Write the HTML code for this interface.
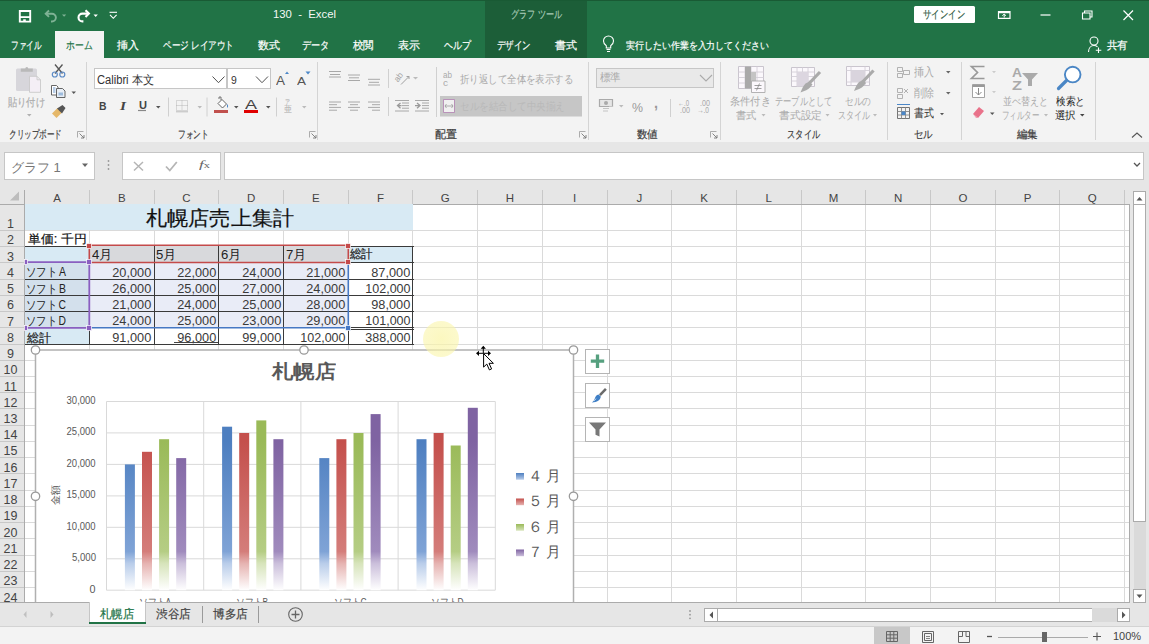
<!DOCTYPE html><html><head><meta charset="utf-8"><style>
*{box-sizing:border-box;margin:0;padding:0}
html,body{width:1149px;height:644px;overflow:hidden;background:#fff;font-family:"Liberation Sans",sans-serif;}
.ab{position:absolute}
.t{position:absolute;white-space:nowrap;line-height:1}
.t span{display:inline-block}
.b{-webkit-text-stroke:0.2px currentColor}
svg{position:absolute;overflow:visible}
</style></head><body>

<div class="ab" style="left:0px;top:0px;width:1149px;height:58px;background:#217346;"></div>
<div class="ab" style="left:485px;top:1px;width:102px;height:57px;background:#1c5e38;"></div>
<div class="ab" style="left:0px;top:0px;width:1149px;height:1px;background:#195a34;"></div>
<svg style="left:0;top:0" width="130" height="31">
<path d="M19.8 11h10.4v10.6h-10.4z" fill="none" stroke="#fff" stroke-width="1.9"/>
<path d="M19.8 16.2h10.4v1.8h-10.4z" fill="#fff"/>
<path d="M23.2 19.3h2.6v2.3h-2.6z" fill="#fff"/>
<g fill="none" stroke="#7fb295" stroke-width="1.9"><path d="M49 10.5l-3.3 3.2l3.3 3.2"/><path d="M46.2 13.7h5.8a3.9 3.9 0 0 1 0 7.8h-1"/></g>
<path d="M62 14.5h4.2l-2.1 2.3z" fill="#7fb295"/>
<g fill="none" stroke="#fff" stroke-width="2.1"><path d="M85.5 10.2l3.4 3.4l-3.4 3.4"/><path d="M88.6 13.6h-6.2a3.9 3.9 0 0 0 0 7.8h1"/></g>
<path d="M93.5 14.5h4.4l-2.2 2.4z" fill="#fff"/>
<path d="M109.5 12.3h7.5" stroke="#fff" stroke-width="1.1"/><path d="M110 14.8l3.3 3.5l3.3-3.5" fill="none" stroke="#fff" stroke-width="1.1"/>
</svg>
<div class="t " id="t1" style="top:9px;font-size:11px;color:#f4f8f5;left:272.5px;transform:scaleX(1.0304);transform-origin:0 0;"><span>130&nbsp; - &nbsp;Excel</span></div>
<div class="t b" id="t2" style="top:9px;font-size:11px;color:#a9cbb7;left:511px;transform:scaleX(0.7385);transform-origin:0 0;"><span>グラフ ツール</span></div>
<div class="ab" style="left:914px;top:6px;width:61px;height:17px;background:#fff;border-radius:1.5px"></div>
<div class="t b" id="t3" style="top:9px;font-size:11px;color:#2f5a43;left:923px;transform:scaleX(0.7636);transform-origin:0 0;"><span>サインイン</span></div>
<svg style="left:0;top:0" width="1149" height="31">
<path d="M998.5 11.5h11.5v6.8h-11.5z" fill="none" stroke="#fff" stroke-width="1.2"/>
<path d="M998.5 12.5h11.5" stroke="#fff" stroke-width="1.5"/>
<path d="M1004.2 14v3.5M1002.4 15.8l1.8-1.8l1.8 1.8" stroke="#fff" stroke-width="1" fill="none"/>
<path d="M1040.5 15h10" stroke="#fff" stroke-width="1.2"/>
<path d="M1082.5 13h7.5v6h-7.5z M1084.5 13v-2h7.5v6h-2" fill="none" stroke="#fff" stroke-width="1.1"/>
<path d="M1123.5 10.5l9.5 9.5M1133 10.5l-9.5 9.5" stroke="#fff" stroke-width="1.2"/>
</svg>
<div class="ab" style="left:55px;top:31px;width:49px;height:27px;background:#f3f3f3;"></div>
<div class="t b" id="t4" style="top:40px;font-size:11px;color:#fff;left:11.2px;transform:scaleX(0.6932);transform-origin:0 0;"><span>ファイル</span></div>
<div class="t b" id="t5" style="top:40px;font-size:11px;color:#217346;left:66.2px;transform:scaleX(0.8030);transform-origin:0 0;"><span>ホーム</span></div>
<div class="t b" id="t6" style="top:40px;font-size:11px;color:#fff;left:116.7px;"><span>挿入</span></div>
<div class="t b" id="t7" style="top:40px;font-size:11px;color:#fff;left:162.7px;transform:scaleX(0.7797);transform-origin:0 0;"><span>ページ レイアウト</span></div>
<div class="t b" id="t8" style="top:40px;font-size:11px;color:#fff;left:257.7px;"><span>数式</span></div>
<div class="t b" id="t9" style="top:40px;font-size:11px;color:#fff;left:302.2px;transform:scaleX(0.8333);transform-origin:0 0;"><span>データ</span></div>
<div class="t b" id="t10" style="top:40px;font-size:11px;color:#fff;left:352.7px;transform:scaleX(0.9545);transform-origin:0 0;"><span>校閲</span></div>
<div class="t b" id="t11" style="top:40px;font-size:11px;color:#fff;left:397.7px;"><span>表示</span></div>
<div class="t b" id="t12" style="top:40px;font-size:11px;color:#fff;left:443.7px;transform:scaleX(0.8182);transform-origin:0 0;"><span>ヘルプ</span></div>
<div class="t b" id="t13" style="top:40px;font-size:11px;color:#fff;left:496.7px;transform:scaleX(0.7727);transform-origin:0 0;"><span>デザイン</span></div>
<div class="t b" id="t14" style="top:40px;font-size:11px;color:#fff;left:554.7px;"><span>書式</span></div>
<div class="t b" id="t15" style="top:40.5px;font-size:10.2px;color:#fff;left:625.7px;transform:scaleX(0.8938);transform-origin:0 0;"><span>実行したい作業を入力してください</span></div>
<div class="t b" id="t16" style="top:40px;font-size:11px;color:#fff;left:1106.7px;transform:scaleX(0.9545);transform-origin:0 0;"><span>共有</span></div>
<svg style="left:0;top:0" width="1149" height="58">
<path d="M606.5 49.5h4M607 51.5h3" stroke="#fff" stroke-width="1"/>
<path d="M606.3 48v-2.3c-1.8-1.2-2.8-2.8-2.8-4.7a5 5 0 0 1 10 0c0 1.9-1 3.5-2.8 4.7v2.3z" fill="none" stroke="#fff" stroke-width="1.1"/>
<circle cx="1094" cy="41" r="4" fill="none" stroke="#fff" stroke-width="1.1"/>
<path d="M1088.5 52c0-4 2.5-6.5 5.5-6.5c1.5 0 2.5 0.5 3.5 1.2" fill="none" stroke="#fff" stroke-width="1.1"/>
<path d="M1098.5 47.5v5.5M1095.8 50.2h5.5" stroke="#fff" stroke-width="1.1"/>
</svg>
<div class="ab" style="left:0px;top:58px;width:1149px;height:84px;background:#f3f3f3;"></div>
<div class="ab" style="left:0px;top:142px;width:1149px;height:1px;background:#d6d6d6;"></div>
<div class="ab" style="left:86px;top:62px;width:1px;height:78px;background:#d4d4d4;"></div>
<div class="ab" style="left:317px;top:62px;width:1px;height:78px;background:#d4d4d4;"></div>
<div class="ab" style="left:588px;top:62px;width:1px;height:78px;background:#d4d4d4;"></div>
<div class="ab" style="left:720px;top:62px;width:1px;height:78px;background:#d4d4d4;"></div>
<div class="ab" style="left:887px;top:62px;width:1px;height:78px;background:#d4d4d4;"></div>
<div class="ab" style="left:961px;top:62px;width:1px;height:78px;background:#d4d4d4;"></div>
<div class="ab" style="left:1095px;top:62px;width:1px;height:78px;background:#d4d4d4;"></div>
<div class="t b" id="t17" style="top:129px;font-size:10.5px;color:#3c3c3c;left:9px;transform:scaleX(0.6883);transform-origin:0 0;"><span>クリップボード</span></div>
<div class="t b" id="t18" style="top:129px;font-size:10.5px;color:#3c3c3c;left:178px;transform:scaleX(0.7045);transform-origin:0 0;"><span>フォント</span></div>
<div class="t b" id="t19" style="top:129px;font-size:10.5px;color:#3c3c3c;left:435px;"><span>配置</span></div>
<div class="t b" id="t20" style="top:129px;font-size:10.5px;color:#3c3c3c;left:637px;transform:scaleX(0.9545);transform-origin:0 0;"><span>数値</span></div>
<div class="t b" id="t21" style="top:129px;font-size:10.5px;color:#3c3c3c;left:787px;transform:scaleX(0.7500);transform-origin:0 0;"><span>スタイル</span></div>
<div class="t b" id="t22" style="top:129px;font-size:10.5px;color:#3c3c3c;left:914px;transform:scaleX(0.8636);transform-origin:0 0;"><span>セル</span></div>
<div class="t b" id="t23" style="top:129px;font-size:10.5px;color:#3c3c3c;left:1017px;transform:scaleX(0.9545);transform-origin:0 0;"><span>編集</span></div>
<svg style="left:77px;top:131px" width="8" height="8"><path d="M0.5 6.5v-6h6" fill="none" stroke="#999" stroke-width="0.8"/><path d="M2.5 2.5l4.5 4.5M7 4v3h-3" fill="none" stroke="#777" stroke-width="0.9"/></svg>
<svg style="left:309px;top:131px" width="8" height="8"><path d="M0.5 6.5v-6h6" fill="none" stroke="#999" stroke-width="0.8"/><path d="M2.5 2.5l4.5 4.5M7 4v3h-3" fill="none" stroke="#777" stroke-width="0.9"/></svg>
<svg style="left:579px;top:131px" width="8" height="8"><path d="M0.5 6.5v-6h6" fill="none" stroke="#999" stroke-width="0.8"/><path d="M2.5 2.5l4.5 4.5M7 4v3h-3" fill="none" stroke="#777" stroke-width="0.9"/></svg>
<svg style="left:710px;top:131px" width="8" height="8"><path d="M0.5 6.5v-6h6" fill="none" stroke="#999" stroke-width="0.8"/><path d="M2.5 2.5l4.5 4.5M7 4v3h-3" fill="none" stroke="#777" stroke-width="0.9"/></svg>
<svg style="left:1130px;top:130px" width="14" height="10"><path d="M2 7.5l5-4.5l5 4.5" fill="none" stroke="#555" stroke-width="1.1"/></svg>
<svg style="left:0;top:0" width="90" height="142">
<rect x="16" y="68.5" width="21" height="22.5" rx="1.5" fill="#d7d6db"/>
<path d="M20.8 71.8v-3.3h4.5a1.5 1.5 0 0 1 3 0h4.5v3.3z" fill="#b9b9b9"/>
<path d="M29.5 76.3h7.5l3.5 3.5v12.5h-11z" fill="#f4eff6" stroke="#c9c9c9" stroke-width="0.9"/>
<path d="M37 76.3v3.5h3.5" fill="none" stroke="#c9c9c9" stroke-width="0.9"/>
<path d="M27 114h4.5l-2.25 2.5z" fill="#b0b0b0"/>
<g stroke="#555" stroke-width="1.3" fill="none"><path d="M55 64.5l7.5 9M62.5 64.5l-7.5 9"/></g>
<circle cx="54.8" cy="74.5" r="2.5" fill="none" stroke="#5b8ac6" stroke-width="1.2"/><circle cx="62.3" cy="74.5" r="2.5" fill="none" stroke="#5b8ac6" stroke-width="1.2"/>
<path d="M51.5 85.5h5l1.5 1.5v8h-6.5z" fill="#fff" stroke="#555" stroke-width="0.9"/>
<path d="M56.5 88.5h6l2.5 2.5v6.5h-8.5z" fill="#e8eef5" stroke="#555" stroke-width="0.9"/>
<path d="M53 88h2.5M53 90h2.5M53 92h2.5" stroke="#4c84c5" stroke-width="0.8"/>
<path d="M58.5 92.5h4.5v3h-4.5z" fill="#9dbbdc"/>
<path d="M71.5 91.5h4.5l-2.25 2.5z" fill="#555"/>
<path d="M52 113.5l5.5-5.5l4.5 4.5l-5.5 5.5z" fill="#e5b86a"/><path d="M57 108.5l5.5-3.5l3 3l-3.5 5.5z" fill="#555"/>
</svg>
<div class="t b" id="t24" style="top:97px;font-size:10.5px;color:#adadad;left:8px;transform:scaleX(0.8409);transform-origin:0 0;"><span>貼り付け</span></div>
<div class="ab" style="left:94px;top:68px;width:133px;height:21px;background:#fff;border:1px solid #c6c6c6"></div>
<div class="ab" style="left:227px;top:68px;width:44px;height:21px;background:#fff;border:1px solid #c6c6c6"></div>
<div class="t " id="t25" style="top:73.5px;font-size:12px;color:#333;left:97px;transform:scaleX(0.9292);transform-origin:0 0;"><span>Calibri 本文</span></div>
<div class="t " id="t26" style="top:74.5px;font-size:11.5px;color:#333;left:230.5px;transform:scaleX(0.9054);transform-origin:0 0;"><span>9</span></div>
<svg style="left:0;top:0" width="1149" height="142">
<path d="M212.5 76.5l6 6.2l6-6.2M256 76.5l6 6.2l6-6.2" fill="none" stroke="#505050" stroke-width="1"/>
<path d="M285 74l2-2.5l2 2.5z" fill="#4b87c8"/><path d="M305.5 71.5l2.5 3l2.5-3z" fill="#4b87c8"/>
<path d="M156 106h4.5l-2.25 2.5z M234 106h4.5l-2.25 2.5z M266 106h4.5l-2.25 2.5z" fill="#555"/>
<path d="M197.5 106h4.5l-2.25 2.5z M302 106h4.5l-2.25 2.5z" fill="#bbb"/>
<path d="M168.5 97.5v19M207 97.5v19M276.5 97.5v19" stroke="#d0d0d0"/>
<g fill="none" stroke="#aaa" stroke-width="0.8" stroke-dasharray="1 1"><path d="M176.5 100.5h11v10h-11zM182 100.5v10M176.5 105.5h11"/></g>
<path d="M176 111.8h12" stroke="#bbb" stroke-width="1"/>
<path d="M214 110h14v3h-14z" fill="#c0504d"/>
<path d="M218 103.5l4-4l4.5 4.5l-4 4z" fill="#fff" stroke="#555" stroke-width="0.9"/><path d="M219 99v-2h2v3" fill="none" stroke="#555" stroke-width="0.8"/><path d="M227 104c1.5 1 1.5 3 0 4" fill="#4b87c8"/>
<path d="M244 110h14v3h-14z" fill="#e00000"/>
<path d="M146 110.5h-8" stroke="#888" stroke-width="1.2"/>
</svg>
<div class="t " id="t27" style="top:73.5px;font-size:13px;color:#555;left:276.3px;transform:scaleX(1.0378);transform-origin:0 0;"><span>A</span></div>
<div class="t " id="t28" style="top:76px;font-size:10.5px;color:#555;left:297px;transform:scaleX(1.2829);transform-origin:0 0;"><span>A</span></div>
<div class="t " id="t29" style="top:101px;font-size:11.5px;color:#444;font-weight:bold;left:99px;transform:scaleX(0.9023);transform-origin:0 0;"><span>B</span></div>
<div class="t " id="t30" style="top:101px;font-size:11.5px;color:#444;left:120px;transform:scaleX(1.3380);transform-origin:0 0;font-style:italic;font-family:'Liberation Serif',serif;font-weight:bold;"><span>I</span></div>
<div class="t " id="t31" style="top:100px;font-size:11.5px;color:#444;font-weight:bold;left:139px;transform:scaleX(0.9624);transform-origin:0 0;"><span>U</span></div>
<div class="t " id="t32" style="top:98.5px;font-size:12.5px;color:#444;left:245px;transform:scaleX(1.4382);transform-origin:0 0;"><span>A</span></div>
<div class="t " id="t33" style="top:99px;font-size:8px;color:#aaa;left:285px;transform:scaleX(0.6250);transform-origin:0 0;"><span>ア</span></div>
<div class="t " id="t34" style="top:105px;font-size:9px;color:#aaa;left:284px;transform:scaleX(0.8889);transform-origin:0 0;"><span>亜</span></div>
<svg style="left:0;top:0" width="1149" height="142">
<g stroke="#a8a8a8" stroke-width="1">
<path d="M329 71.5h12M330 74.5h10M329 77h12"/>
<path d="M348 75h12M349 77.8h10M348 80.5h12"/>
<path d="M368 79.3h12M369 82.3h10M368 85h12"/>
<path d="M329 102h12M329 104.7h8M329 107.4h12M329 110.2h8"/>
<path d="M348 102h12M350 104.7h8M348 107.4h12M350 110.2h8"/>
<path d="M368 102h12M372 104.7h8M368 107.4h12M372 110.2h8"/>
<path d="M395 100.5h14M402 103h7M402 105.6h7M402 108.2h7M395 111h14"/>
<path d="M415 100.5h14M422 103h7M422 105.6h7M422 108.2h7M415 111h14"/>
</g>
<path d="M400.5 103l-3 2.6l3 2.6M397.5 105.6h4" stroke="#999" fill="none" stroke-width="1.3"/>
<path d="M417 103l3 2.6l-3 2.6M415 105.6h5" stroke="#999" fill="none" stroke-width="1.3"/>
<path d="M388.5 69v19M388.5 97v19M436.5 67v50" stroke="#d0d0d0"/>
<text x="0" y="0" transform="translate(398 82.5) rotate(-55)" font-family="Liberation Sans" font-size="8.5" fill="#a0a0a0">ab</text>
<path d="M401 84.5l8-8M406.5 76.5h2.5v2.5" stroke="#a0a0a0" fill="none" stroke-width="1"/>
<path d="M413 77h5l-2.5 2.5z" fill="#bbb"/>
<path d="M440 96h142v20.5h-142z" fill="#c6c6c6"/>
<path d="M443.5 99.5h11v13h-11z" fill="#f0f0f0" stroke="#b07fb0" stroke-width="0.8"/>
<path d="M445 106h8M446.5 104l-1.5 2l1.5 2M451.5 104l1.5 2l-1.5 2" stroke="#999" stroke-width="0.8" fill="none"/>
</svg>
<div class="t " id="t35" style="top:71px;font-size:9px;color:#aaa;left:443px;transform:scaleX(0.8986);transform-origin:0 0;"><span>ab</span></div>
<div class="t " id="t36" style="top:79px;font-size:9px;color:#aaa;left:443px;transform:scaleX(1.1111);transform-origin:0 0;"><span>c</span></div>
<div class="t " id="t37" style="top:74px;font-size:11px;color:#aaa;left:460px;transform:scaleX(0.8561);transform-origin:0 0;"><span>折り返して全体を表示する</span></div>
<div class="t " id="t38" style="top:101px;font-size:11px;color:#b9b9b9;left:460px;transform:scaleX(0.8678);transform-origin:0 0;"><span>セルを結合して中央揃え</span></div>
<div class="ab" style="left:596px;top:68px;width:118px;height:20px;background:#e9e9e9;border:1px solid #c6c6c6"></div>
<div class="t " id="t39" style="top:72px;font-size:11px;color:#aaa;left:600px;transform:scaleX(0.9545);transform-origin:0 0;"><span>標準</span></div>
<svg style="left:0;top:0" width="1149" height="142">
<path d="M700 75l6 6l6-6" fill="none" stroke="#aaa" stroke-width="1.1"/>
<path d="M599.5 99.5h13v7h-13z" fill="#e6e6e6" stroke="#aaa" stroke-width="1.2"/><circle cx="606" cy="103" r="2" fill="#aaa"/>
<path d="M603 108.5h6M603 111h5M609 106.5h4" stroke="#c4c4c4" stroke-width="1.2"/>
<path d="M619 105h4.5l-2.25 2.5z" fill="#bbb"/>
<path d="M670.5 99v18" stroke="#d0d0d0"/>
</svg>
<div class="t " id="t40" style="top:100.5px;font-size:13px;color:#9a9a9a;left:631.8px;transform:scaleX(0.9514);transform-origin:0 0;"><span>%</span></div>
<div class="t " id="t41" style="top:95px;font-size:15px;color:#999;font-weight:bold;left:653.5px;transform:scaleX(0.9588);transform-origin:0 0;"><span>,</span></div>
<div class="t " id="t42" style="top:99px;font-size:8.5px;color:#aaa;left:678px;transform:scaleX(0.7054);transform-origin:0 0;"><span>←.0</span></div>
<div class="t " id="t43" style="top:106px;font-size:8.5px;color:#aaa;left:680px;transform:scaleX(0.8454);transform-origin:0 0;"><span>.00</span></div>
<div class="t " id="t44" style="top:99px;font-size:8.5px;color:#aaa;left:700px;transform:scaleX(0.8454);transform-origin:0 0;"><span>.00</span></div>
<div class="t " id="t45" style="top:106px;font-size:8.5px;color:#aaa;left:697px;transform:scaleX(0.7695);transform-origin:0 0;"><span>→.0</span></div>
<svg style="left:0;top:0" width="1149" height="142">
<g fill="#fbf8fc" stroke="#c4bfc8" stroke-width="0.9">
<path d="M738.5 66.5h25v22h-25z"/><path d="M791.5 67.5h23v19h-23z"/><path d="M846.5 66.5h23v19h-23z"/>
</g>
<g stroke="#d4cfd8" stroke-width="0.9"><path d="M738.5 72h25M738.5 77.5h25M738.5 83h25M745 66.5v22M751 66.5v22M757 66.5v22"/>
<path d="M791.5 72h23M791.5 76.5h23M791.5 81h23M797 67.5v19M802.5 67.5v19M808 67.5v19"/>
<path d="M846.5 70.5h23M846.5 82h23M851 66.5v19M865 66.5v19"/>
</g>
<path d="M745 66.5h6v22h-6z" fill="#a9a9a9"/><path d="M751 72h5v11h-5z" fill="#c4c4c4"/>
<path d="M751.5 81h13.5v11.5h-13.5z" fill="#fbf8fc" stroke="#aaa" stroke-width="0.9"/>
<path d="M754.5 85.5h7M754.5 88.5h7M759.5 83.5l-3 7" stroke="#888" stroke-width="0.8"/>
<path d="M797 72h11.5v14.5h-11.5z" fill="#dcd6e0"/>
<path d="M851 70.5h14v11.5h-14z" fill="#d9d4dd"/>
<path d="M820 72l-11 11.5" stroke="#aaa" stroke-width="3.2"/><path d="M809.5 81.5l3 3l-2.5 3c-2 2-5 3.5-9.5 5c1.5-4 3-7 5-9z" fill="#aaa"/>
<path d="M873.5 70.5l-11 11.5" stroke="#aaa" stroke-width="3.2"/><path d="M863 80l3 3l-2.5 3c-2 2-5 3.5-9.5 5c1.5-4 3-7 5-9z" fill="#aaa"/>
</svg>
<div class="t " id="t46" style="top:96px;font-size:10.5px;color:#aaa;left:730.3px;transform:scaleX(0.9318);transform-origin:0 0;"><span>条件付き</span></div>
<div class="t " id="t47" style="top:110px;font-size:10.5px;color:#aaa;left:736px;transform:scaleX(0.9318);transform-origin:0 0;"><span>書式</span></div>
<div class="t " id="t48" style="top:96px;font-size:10.5px;color:#aaa;left:775px;transform:scaleX(0.7468);transform-origin:0 0;"><span>テーブルとして</span></div>
<div class="t " id="t49" style="top:110px;font-size:10.5px;color:#aaa;left:779px;transform:scaleX(0.9773);transform-origin:0 0;"><span>書式設定</span></div>
<div class="t " id="t50" style="top:96px;font-size:10.5px;color:#aaa;left:844.8px;transform:scaleX(0.7879);transform-origin:0 0;"><span>セルの</span></div>
<div class="t " id="t51" style="top:110px;font-size:10.5px;color:#aaa;left:837.5px;transform:scaleX(0.7273);transform-origin:0 0;"><span>スタイル</span></div>
<svg style="left:0;top:0" width="1149" height="142">
<g fill="none" stroke="#aaa" stroke-width="0.9">
<path d="M897.5 67.5h5v4h-5zM897.5 73.5h5v4h-5zM903.5 70.5h6v4h-6z"/>
<path d="M897.5 88.5h5v4h-5zM897.5 94.5h5v4h-5zM904 89l4 4M908 89l-4 4"/>
<path d="M897.5 107.5h12v11h-12z" stroke="#666"/><path d="M897.5 111.5h12M897.5 115h12M901.5 107.5v11M905.5 107.5v11" stroke="#888"/>
</g>
<path d="M901.5 111.5h4v3.5h-4z" fill="#4b87c8"/>
<path d="M897 104.5h13" stroke="#4b87c8" stroke-width="1"/>
<path d="M946 71h4.5l-2.25 2.5zM946 92h4.5l-2.25 2.5z" fill="#666"/>
<path d="M940 113h4l-2 2.3z" fill="#555"/>
</svg>
<div class="t " id="t52" style="top:67px;font-size:11.5px;color:#aaa;left:914px;transform:scaleX(0.8333);transform-origin:0 0;"><span>挿入</span></div>
<div class="t " id="t53" style="top:88px;font-size:11.5px;color:#aaa;left:914px;transform:scaleX(0.8333);transform-origin:0 0;"><span>削除</span></div>
<div class="t " id="t54" style="top:108px;font-size:11.5px;color:#333;left:914px;transform:scaleX(0.8333);transform-origin:0 0;"><span>書式</span></div>
<svg style="left:0;top:0" width="1149" height="142">
<path d="M984.5 66.5h-13l6 6l-6 6h13" fill="none" stroke="#999" stroke-width="1.7"/>
<path d="M992 71h4l-2 2.3zM992 91h4l-2 2.3z" fill="#ccc"/>
<path d="M972.5 84.5h12v13h-12z" fill="#fff" stroke="#999" stroke-width="0.9"/><path d="M972.5 86h12" stroke="#999" stroke-width="2"/>
<path d="M978.5 88v7M975.5 92l3 3l3-3" fill="none" stroke="#888" stroke-width="1"/>
<path d="M973 114l6-7l5 4l-6 7z" fill="#e9728a"/><path d="M973 114l3 4h2" fill="#f0a0b0"/>
<path d="M990 112.5h4.5l-2.25 2.5z" fill="#555"/>
<path d="M1022 73h16l-6 6.5v6.5h-4v-6.5z" fill="#aaa"/>
<circle cx="1072.7" cy="74.6" r="7.8" fill="#fff" stroke="#4a86c5" stroke-width="1.9"/>
<path d="M1066.5 80.5l-8 8" stroke="#4a86c5" stroke-width="3.2" stroke-linecap="round"/>
</svg>
<div class="t " id="t55" style="top:66px;font-size:13px;color:#aaa;font-weight:bold;left:1012px;transform:scaleX(1.0649);transform-origin:0 0;"><span>A</span></div>
<div class="t " id="t56" style="top:79px;font-size:13px;color:#aaa;font-weight:bold;left:1012px;transform:scaleX(1.2574);transform-origin:0 0;"><span>Z</span></div>
<div class="t " id="t57" style="top:96px;font-size:10.5px;color:#aaa;left:1003px;transform:scaleX(0.8182);transform-origin:0 0;"><span>並べ替えと</span></div>
<div class="t " id="t58" style="top:110px;font-size:10.5px;color:#aaa;left:1002px;transform:scaleX(0.6818);transform-origin:0 0;"><span>フィルター</span></div>
<div class="t " id="t59" style="top:96px;font-size:10.5px;color:#222;left:1055.5px;transform:scaleX(0.8788);transform-origin:0 0;"><span>検索と</span></div>
<div class="t " id="t60" style="top:110px;font-size:10.5px;color:#222;left:1055px;transform:scaleX(0.9545);transform-origin:0 0;"><span>選択</span></div>
<div class="ab" style="left:0px;top:142px;width:1149px;height:48px;background:#e6e6e6;"></div>
<div class="ab" style="left:4px;top:152px;width:91px;height:28px;background:#fff;border:1px solid #c6c6c6"></div>
<div class="t " id="t61" style="top:161px;font-size:13px;color:#777;left:11px;"><span>グラフ 1</span></div>
<svg style="left:0;top:0" width="1149" height="190"><path d="M82 163.5h6l-3 3.5z" fill="#666"/><circle cx="108.5" cy="161" r="0.9" fill="#999"/><circle cx="108.5" cy="165" r="0.9" fill="#999"/><circle cx="108.5" cy="169" r="0.9" fill="#999"/><path d="M135 161l7 7M142 161l-7 7" stroke="#aaa" stroke-width="1.1"/><path d="M165.5 165l3 3.5l6-7" fill="none" stroke="#aaa" stroke-width="1.3"/><path d="M1134 163l3 3l3-3" fill="none" stroke="#555" stroke-width="1.3"/></svg>
<div class="ab" style="left:122px;top:152px;width:99px;height:28px;background:#fff;border:1px solid #c6c6c6"></div>
<svg style="left:0;top:0" width="1149" height="190"><path d="M134 162l9 8.5M143 162l-9 8.5" stroke="#b5b5b5" stroke-width="1.5"/><path d="M166 166.5l3.8 4l7-8.5" fill="none" stroke="#b5b5b5" stroke-width="1.8"/></svg>
<div class="t " id="t62" style="top:159px;font-size:11px;color:#666;font-family:'Liberation Serif',serif;left:199px;transform:scaleX(1.5575);transform-origin:0 0;"><span><i>f</i><span style="font-size:8px">x</span></span></div>
<div class="ab" style="left:224px;top:152px;width:920px;height:28px;background:#fff;border:1px solid #c6c6c6"></div>
<svg style="left:0;top:0" width="1149" height="190"><path d="M1134 163l3 3l3-3" fill="none" stroke="#555" stroke-width="1.3"/></svg>
<svg style="left:0;top:0" width="1149" height="142">
<path d="M761.5 114h4l-2 2.5zM825.5 114h4l-2 2.5zM873 114h4l-2 2.5zM1044 114h4l-2 2.5z" fill="#bbb"/>
<path d="M1080 114h4.5l-2.25 2.5z" fill="#444"/>
</svg>
<div class="ab" style="left:0px;top:190px;width:1131px;height:15px;background:#e6e6e6;"></div>
<div class="ab" style="left:0px;top:205px;width:25px;height:398px;background:#e6e6e6;"></div>
<div class="ab" style="left:25px;top:205px;width:1105px;height:398px;background:#fff;"></div>
<div class="ab" style="left:89px;top:205px;width:1px;height:398px;background:#dadada;"></div>
<div class="ab" style="left:89px;top:190px;width:1px;height:14px;background:#c8c8c8;"></div>
<div class="ab" style="left:154px;top:205px;width:1px;height:398px;background:#dadada;"></div>
<div class="ab" style="left:154px;top:190px;width:1px;height:14px;background:#c8c8c8;"></div>
<div class="ab" style="left:218px;top:205px;width:1px;height:398px;background:#dadada;"></div>
<div class="ab" style="left:218px;top:190px;width:1px;height:14px;background:#c8c8c8;"></div>
<div class="ab" style="left:283px;top:205px;width:1px;height:398px;background:#dadada;"></div>
<div class="ab" style="left:283px;top:190px;width:1px;height:14px;background:#c8c8c8;"></div>
<div class="ab" style="left:348px;top:205px;width:1px;height:398px;background:#dadada;"></div>
<div class="ab" style="left:348px;top:190px;width:1px;height:14px;background:#c8c8c8;"></div>
<div class="ab" style="left:412px;top:205px;width:1px;height:398px;background:#dadada;"></div>
<div class="ab" style="left:412px;top:190px;width:1px;height:14px;background:#c8c8c8;"></div>
<div class="ab" style="left:477px;top:205px;width:1px;height:398px;background:#dadada;"></div>
<div class="ab" style="left:477px;top:190px;width:1px;height:14px;background:#c8c8c8;"></div>
<div class="ab" style="left:542px;top:205px;width:1px;height:398px;background:#dadada;"></div>
<div class="ab" style="left:542px;top:190px;width:1px;height:14px;background:#c8c8c8;"></div>
<div class="ab" style="left:607px;top:205px;width:1px;height:398px;background:#dadada;"></div>
<div class="ab" style="left:607px;top:190px;width:1px;height:14px;background:#c8c8c8;"></div>
<div class="ab" style="left:671px;top:205px;width:1px;height:398px;background:#dadada;"></div>
<div class="ab" style="left:671px;top:190px;width:1px;height:14px;background:#c8c8c8;"></div>
<div class="ab" style="left:736px;top:205px;width:1px;height:398px;background:#dadada;"></div>
<div class="ab" style="left:736px;top:190px;width:1px;height:14px;background:#c8c8c8;"></div>
<div class="ab" style="left:801px;top:205px;width:1px;height:398px;background:#dadada;"></div>
<div class="ab" style="left:801px;top:190px;width:1px;height:14px;background:#c8c8c8;"></div>
<div class="ab" style="left:865px;top:205px;width:1px;height:398px;background:#dadada;"></div>
<div class="ab" style="left:865px;top:190px;width:1px;height:14px;background:#c8c8c8;"></div>
<div class="ab" style="left:930px;top:205px;width:1px;height:398px;background:#dadada;"></div>
<div class="ab" style="left:930px;top:190px;width:1px;height:14px;background:#c8c8c8;"></div>
<div class="ab" style="left:995px;top:205px;width:1px;height:398px;background:#dadada;"></div>
<div class="ab" style="left:995px;top:190px;width:1px;height:14px;background:#c8c8c8;"></div>
<div class="ab" style="left:1059px;top:205px;width:1px;height:398px;background:#dadada;"></div>
<div class="ab" style="left:1059px;top:190px;width:1px;height:14px;background:#c8c8c8;"></div>
<div class="ab" style="left:1124px;top:205px;width:1px;height:398px;background:#dadada;"></div>
<div class="ab" style="left:1124px;top:190px;width:1px;height:14px;background:#c8c8c8;"></div>
<div class="ab" style="left:25px;top:230px;width:1105px;height:1px;background:#dadada;"></div>
<div class="ab" style="left:0px;top:230px;width:24px;height:1px;background:#c8c8c8;"></div>
<div class="ab" style="left:25px;top:246px;width:1105px;height:1px;background:#dadada;"></div>
<div class="ab" style="left:0px;top:246px;width:24px;height:1px;background:#c8c8c8;"></div>
<div class="ab" style="left:25px;top:262px;width:1105px;height:1px;background:#dadada;"></div>
<div class="ab" style="left:0px;top:262px;width:24px;height:1px;background:#c8c8c8;"></div>
<div class="ab" style="left:25px;top:279px;width:1105px;height:1px;background:#dadada;"></div>
<div class="ab" style="left:0px;top:279px;width:24px;height:1px;background:#c8c8c8;"></div>
<div class="ab" style="left:25px;top:295px;width:1105px;height:1px;background:#dadada;"></div>
<div class="ab" style="left:0px;top:295px;width:24px;height:1px;background:#c8c8c8;"></div>
<div class="ab" style="left:25px;top:311px;width:1105px;height:1px;background:#dadada;"></div>
<div class="ab" style="left:0px;top:311px;width:24px;height:1px;background:#c8c8c8;"></div>
<div class="ab" style="left:25px;top:327px;width:1105px;height:1px;background:#dadada;"></div>
<div class="ab" style="left:0px;top:327px;width:24px;height:1px;background:#c8c8c8;"></div>
<div class="ab" style="left:25px;top:344px;width:1105px;height:1px;background:#dadada;"></div>
<div class="ab" style="left:0px;top:344px;width:24px;height:1px;background:#c8c8c8;"></div>
<div class="ab" style="left:25px;top:360px;width:1105px;height:1px;background:#dadada;"></div>
<div class="ab" style="left:0px;top:360px;width:24px;height:1px;background:#c8c8c8;"></div>
<div class="ab" style="left:25px;top:376px;width:1105px;height:1px;background:#dadada;"></div>
<div class="ab" style="left:0px;top:376px;width:24px;height:1px;background:#c8c8c8;"></div>
<div class="ab" style="left:25px;top:392px;width:1105px;height:1px;background:#dadada;"></div>
<div class="ab" style="left:0px;top:392px;width:24px;height:1px;background:#c8c8c8;"></div>
<div class="ab" style="left:25px;top:408px;width:1105px;height:1px;background:#dadada;"></div>
<div class="ab" style="left:0px;top:408px;width:24px;height:1px;background:#c8c8c8;"></div>
<div class="ab" style="left:25px;top:425px;width:1105px;height:1px;background:#dadada;"></div>
<div class="ab" style="left:0px;top:425px;width:24px;height:1px;background:#c8c8c8;"></div>
<div class="ab" style="left:25px;top:441px;width:1105px;height:1px;background:#dadada;"></div>
<div class="ab" style="left:0px;top:441px;width:24px;height:1px;background:#c8c8c8;"></div>
<div class="ab" style="left:25px;top:457px;width:1105px;height:1px;background:#dadada;"></div>
<div class="ab" style="left:0px;top:457px;width:24px;height:1px;background:#c8c8c8;"></div>
<div class="ab" style="left:25px;top:473px;width:1105px;height:1px;background:#dadada;"></div>
<div class="ab" style="left:0px;top:473px;width:24px;height:1px;background:#c8c8c8;"></div>
<div class="ab" style="left:25px;top:490px;width:1105px;height:1px;background:#dadada;"></div>
<div class="ab" style="left:0px;top:490px;width:24px;height:1px;background:#c8c8c8;"></div>
<div class="ab" style="left:25px;top:506px;width:1105px;height:1px;background:#dadada;"></div>
<div class="ab" style="left:0px;top:506px;width:24px;height:1px;background:#c8c8c8;"></div>
<div class="ab" style="left:25px;top:522px;width:1105px;height:1px;background:#dadada;"></div>
<div class="ab" style="left:0px;top:522px;width:24px;height:1px;background:#c8c8c8;"></div>
<div class="ab" style="left:25px;top:538px;width:1105px;height:1px;background:#dadada;"></div>
<div class="ab" style="left:0px;top:538px;width:24px;height:1px;background:#c8c8c8;"></div>
<div class="ab" style="left:25px;top:555px;width:1105px;height:1px;background:#dadada;"></div>
<div class="ab" style="left:0px;top:555px;width:24px;height:1px;background:#c8c8c8;"></div>
<div class="ab" style="left:25px;top:571px;width:1105px;height:1px;background:#dadada;"></div>
<div class="ab" style="left:0px;top:571px;width:24px;height:1px;background:#c8c8c8;"></div>
<div class="ab" style="left:25px;top:587px;width:1105px;height:1px;background:#dadada;"></div>
<div class="ab" style="left:0px;top:587px;width:24px;height:1px;background:#c8c8c8;"></div>
<div class="ab" style="left:0px;top:204px;width:1130px;height:1px;background:#ababab;"></div>
<div class="ab" style="left:24px;top:190px;width:1px;height:413px;background:#ababab;"></div>
<svg style="left:0;top:0" width="30" height="210"><path d="M19 200.5v-9l-9 9z" fill="#bdbdbd"/></svg>
<div class="t" style="left:37.1px;width:40px;text-align:center;top:192.5px;font-size:11.5px;color:#444">A</div>
<div class="t" style="left:101.8px;width:40px;text-align:center;top:192.5px;font-size:11.5px;color:#444">B</div>
<div class="t" style="left:166.4px;width:40px;text-align:center;top:192.5px;font-size:11.5px;color:#444">C</div>
<div class="t" style="left:231.2px;width:40px;text-align:center;top:192.5px;font-size:11.5px;color:#444">D</div>
<div class="t" style="left:295.9px;width:40px;text-align:center;top:192.5px;font-size:11.5px;color:#444">E</div>
<div class="t" style="left:360.6px;width:40px;text-align:center;top:192.5px;font-size:11.5px;color:#444">F</div>
<div class="t" style="left:425.2px;width:40px;text-align:center;top:192.5px;font-size:11.5px;color:#444">G</div>
<div class="t" style="left:490.0px;width:40px;text-align:center;top:192.5px;font-size:11.5px;color:#444">H</div>
<div class="t" style="left:554.7px;width:40px;text-align:center;top:192.5px;font-size:11.5px;color:#444">I</div>
<div class="t" style="left:619.4px;width:40px;text-align:center;top:192.5px;font-size:11.5px;color:#444">J</div>
<div class="t" style="left:684.1px;width:40px;text-align:center;top:192.5px;font-size:11.5px;color:#444">K</div>
<div class="t" style="left:748.8px;width:40px;text-align:center;top:192.5px;font-size:11.5px;color:#444">L</div>
<div class="t" style="left:813.5px;width:40px;text-align:center;top:192.5px;font-size:11.5px;color:#444">M</div>
<div class="t" style="left:878.2px;width:40px;text-align:center;top:192.5px;font-size:11.5px;color:#444">N</div>
<div class="t" style="left:942.9px;width:40px;text-align:center;top:192.5px;font-size:11.5px;color:#444">O</div>
<div class="t" style="left:1007.6px;width:40px;text-align:center;top:192.5px;font-size:11.5px;color:#444">P</div>
<div class="t" style="left:1072.2px;width:40px;text-align:center;top:192.5px;font-size:11.5px;color:#444">Q</div>
<div class="t" style="left:-1.5px;width:24px;text-align:center;top:218.2px;font-size:12.5px;color:#444">1</div>
<div class="t" style="left:-1.5px;width:24px;text-align:center;top:234.4px;font-size:12.5px;color:#444">2</div>
<div class="t" style="left:-1.5px;width:24px;text-align:center;top:250.6px;font-size:12.5px;color:#444">3</div>
<div class="t" style="left:-1.5px;width:24px;text-align:center;top:266.9px;font-size:12.5px;color:#444">4</div>
<div class="t" style="left:-1.5px;width:24px;text-align:center;top:283.1px;font-size:12.5px;color:#444">5</div>
<div class="t" style="left:-1.5px;width:24px;text-align:center;top:299.3px;font-size:12.5px;color:#444">6</div>
<div class="t" style="left:-1.5px;width:24px;text-align:center;top:315.5px;font-size:12.5px;color:#444">7</div>
<div class="t" style="left:-1.5px;width:24px;text-align:center;top:331.8px;font-size:12.5px;color:#444">8</div>
<div class="t" style="left:-1.5px;width:24px;text-align:center;top:348.0px;font-size:12.5px;color:#444">9</div>
<div class="t" style="left:-1.5px;width:24px;text-align:center;top:364.2px;font-size:12.5px;color:#444">10</div>
<div class="t" style="left:-1.5px;width:24px;text-align:center;top:380.5px;font-size:12.5px;color:#444">11</div>
<div class="t" style="left:-1.5px;width:24px;text-align:center;top:396.7px;font-size:12.5px;color:#444">12</div>
<div class="t" style="left:-1.5px;width:24px;text-align:center;top:412.9px;font-size:12.5px;color:#444">13</div>
<div class="t" style="left:-1.5px;width:24px;text-align:center;top:429.1px;font-size:12.5px;color:#444">14</div>
<div class="t" style="left:-1.5px;width:24px;text-align:center;top:445.4px;font-size:12.5px;color:#444">15</div>
<div class="t" style="left:-1.5px;width:24px;text-align:center;top:461.6px;font-size:12.5px;color:#444">16</div>
<div class="t" style="left:-1.5px;width:24px;text-align:center;top:477.8px;font-size:12.5px;color:#444">17</div>
<div class="t" style="left:-1.5px;width:24px;text-align:center;top:494.1px;font-size:12.5px;color:#444">18</div>
<div class="t" style="left:-1.5px;width:24px;text-align:center;top:510.3px;font-size:12.5px;color:#444">19</div>
<div class="t" style="left:-1.5px;width:24px;text-align:center;top:526.5px;font-size:12.5px;color:#444">20</div>
<div class="t" style="left:-1.5px;width:24px;text-align:center;top:542.8px;font-size:12.5px;color:#444">21</div>
<div class="t" style="left:-1.5px;width:24px;text-align:center;top:559.0px;font-size:12.5px;color:#444">22</div>
<div class="t" style="left:-1.5px;width:24px;text-align:center;top:575.2px;font-size:12.5px;color:#444">23</div>
<div class="t" style="left:-1.5px;width:24px;text-align:center;top:591.5px;font-size:12.5px;color:#444">24</div>
<div class="ab" style="left:25px;top:204px;width:388px;height:26px;background:#d8eaf4;"></div>
<div class="ab" style="left:25px;top:246px;width:64px;height:17px;background:#d8eaf4;"></div>
<div class="ab" style="left:89px;top:246px;width:259px;height:17px;background:#d8d9dc;"></div>
<div class="ab" style="left:348px;top:246px;width:65px;height:17px;background:#d8eaf4;"></div>
<div class="ab" style="left:25px;top:263px;width:64px;height:65px;background:#d3e0ec;"></div>
<div class="ab" style="left:89px;top:263px;width:259px;height:65px;background:#e9ecf7;"></div>
<div class="ab" style="left:25px;top:328px;width:64px;height:16px;background:#d8eaf4;"></div>
<div class="ab" style="left:25px;top:246px;width:65px;height:1px;background:#3a3a3a;"></div>
<div class="ab" style="left:348px;top:246px;width:66px;height:1px;background:#3a3a3a;"></div>
<div class="ab" style="left:25px;top:262px;width:389px;height:1px;background:#3a3a3a;"></div>
<div class="ab" style="left:25px;top:279px;width:389px;height:1px;background:#3a3a3a;"></div>
<div class="ab" style="left:25px;top:295px;width:389px;height:1px;background:#3a3a3a;"></div>
<div class="ab" style="left:25px;top:311px;width:389px;height:1px;background:#3a3a3a;"></div>
<div class="ab" style="left:25px;top:327px;width:389px;height:1px;background:#3a3a3a;"></div>
<div class="ab" style="left:25px;top:344px;width:389px;height:1px;background:#3a3a3a;"></div>
<div class="ab" style="left:89px;top:263px;width:1px;height:81px;background:#3a3a3a;"></div>
<div class="ab" style="left:154px;top:246px;width:1px;height:98px;background:#3a3a3a;"></div>
<div class="ab" style="left:218px;top:246px;width:1px;height:98px;background:#3a3a3a;"></div>
<div class="ab" style="left:283px;top:246px;width:1px;height:98px;background:#3a3a3a;"></div>
<div class="ab" style="left:348px;top:263px;width:1px;height:81px;background:#3a3a3a;"></div>
<div class="ab" style="left:412px;top:246px;width:1px;height:98px;background:#3a3a3a;"></div>
<div class="ab" style="left:348px;top:329px;width:66px;height:1px;background:#3a3a3a;"></div>
<div class="t b" id="t63" style="top:208px;font-size:20px;color:#111;left:145.5px;transform:scaleX(1.0571);transform-origin:0 0;"><span>札幌店売上集計</span></div>
<div class="t b" id="t64" style="top:233px;font-size:12px;color:#111;left:27.5px;transform:scaleX(1.0700);transform-origin:0 0;"><span>単価: 千円</span></div>
<div class="t " id="t65" style="top:248px;font-size:13px;color:#222;left:91.60000000000001px;transform:scaleX(1.0131);transform-origin:0 0;"><span>4月</span></div>
<div class="t " id="t66" style="top:248px;font-size:13px;color:#222;left:156.29999999999998px;transform:scaleX(1.0131);transform-origin:0 0;"><span>5月</span></div>
<div class="t " id="t67" style="top:248px;font-size:13px;color:#222;left:221.0px;transform:scaleX(1.0131);transform-origin:0 0;"><span>6月</span></div>
<div class="t " id="t68" style="top:248px;font-size:13px;color:#222;left:285.7px;transform:scaleX(1.0131);transform-origin:0 0;"><span>7月</span></div>
<div class="t b" id="t69" style="top:248px;font-size:12px;color:#222;left:350.2px;transform:scaleX(0.9583);transform-origin:0 0;"><span>総計</span></div>
<div class="t " id="t70" style="top:266.42px;font-size:12px;color:#222;left:26px;transform:scaleX(0.8693);transform-origin:0 0;"><span>ソフト<span style="display:inline-block;width:2px"></span>A</span></div>
<div class="t " id="t71" style="top:282.65000000000003px;font-size:12px;color:#222;left:26px;transform:scaleX(0.8693);transform-origin:0 0;"><span>ソフト<span style="display:inline-block;width:2px"></span>B</span></div>
<div class="t " id="t72" style="top:298.88px;font-size:12px;color:#222;left:26px;transform:scaleX(0.8570);transform-origin:0 0;"><span>ソフト<span style="display:inline-block;width:2px"></span>C</span></div>
<div class="t " id="t73" style="top:315.11px;font-size:12px;color:#222;left:26px;transform:scaleX(0.8570);transform-origin:0 0;"><span>ソフト<span style="display:inline-block;width:2px"></span>D</span></div>
<div class="t b" id="t74" style="top:332.04px;font-size:12px;color:#222;left:27px;"><span>総計</span></div>
<div class="t " id="t75" style="top:266.62px;font-size:12.5px;color:#3a3a3a;right:997.5px;transform:scaleX(1.0200);transform-origin:100% 0;"><span>20,000</span></div>
<div class="t " id="t76" style="top:266.62px;font-size:12.5px;color:#3a3a3a;right:932.5px;transform:scaleX(1.0200);transform-origin:100% 0;"><span>22,000</span></div>
<div class="t " id="t77" style="top:266.62px;font-size:12.5px;color:#3a3a3a;right:867.5px;transform:scaleX(1.0200);transform-origin:100% 0;"><span>24,000</span></div>
<div class="t " id="t78" style="top:266.62px;font-size:12.5px;color:#3a3a3a;right:803.5px;transform:scaleX(1.0200);transform-origin:100% 0;"><span>21,000</span></div>
<div class="t " id="t79" style="top:266.62px;font-size:12.5px;color:#3a3a3a;right:738.5px;transform:scaleX(1.0200);transform-origin:100% 0;"><span>87,000</span></div>
<div class="t " id="t80" style="top:282.85px;font-size:12.5px;color:#3a3a3a;right:997.5px;transform:scaleX(1.0200);transform-origin:100% 0;"><span>26,000</span></div>
<div class="t " id="t81" style="top:282.85px;font-size:12.5px;color:#3a3a3a;right:932.5px;transform:scaleX(1.0200);transform-origin:100% 0;"><span>25,000</span></div>
<div class="t " id="t82" style="top:282.85px;font-size:12.5px;color:#3a3a3a;right:867.5px;transform:scaleX(1.0200);transform-origin:100% 0;"><span>27,000</span></div>
<div class="t " id="t83" style="top:282.85px;font-size:12.5px;color:#3a3a3a;right:803.5px;transform:scaleX(1.0200);transform-origin:100% 0;"><span>24,000</span></div>
<div class="t " id="t84" style="top:282.85px;font-size:12.5px;color:#3a3a3a;right:738.5px;"><span>102,000</span></div>
<div class="t " id="t85" style="top:299.08px;font-size:12.5px;color:#3a3a3a;right:997.5px;transform:scaleX(1.0200);transform-origin:100% 0;"><span>21,000</span></div>
<div class="t " id="t86" style="top:299.08px;font-size:12.5px;color:#3a3a3a;right:932.5px;transform:scaleX(1.0200);transform-origin:100% 0;"><span>24,000</span></div>
<div class="t " id="t87" style="top:299.08px;font-size:12.5px;color:#3a3a3a;right:867.5px;transform:scaleX(1.0200);transform-origin:100% 0;"><span>25,000</span></div>
<div class="t " id="t88" style="top:299.08px;font-size:12.5px;color:#3a3a3a;right:803.5px;transform:scaleX(1.0200);transform-origin:100% 0;"><span>28,000</span></div>
<div class="t " id="t89" style="top:299.08px;font-size:12.5px;color:#3a3a3a;right:738.5px;transform:scaleX(1.0200);transform-origin:100% 0;"><span>98,000</span></div>
<div class="t " id="t90" style="top:315.31px;font-size:12.5px;color:#3a3a3a;right:997.5px;transform:scaleX(1.0200);transform-origin:100% 0;"><span>24,000</span></div>
<div class="t " id="t91" style="top:315.31px;font-size:12.5px;color:#3a3a3a;right:932.5px;transform:scaleX(1.0200);transform-origin:100% 0;"><span>25,000</span></div>
<div class="t " id="t92" style="top:315.31px;font-size:12.5px;color:#3a3a3a;right:867.5px;transform:scaleX(1.0200);transform-origin:100% 0;"><span>23,000</span></div>
<div class="t " id="t93" style="top:315.31px;font-size:12.5px;color:#3a3a3a;right:803.5px;transform:scaleX(1.0200);transform-origin:100% 0;"><span>29,000</span></div>
<div class="t " id="t94" style="top:315.31px;font-size:12.5px;color:#3a3a3a;right:738.5px;"><span>101,000</span></div>
<div class="t " id="t95" style="top:331.54px;font-size:12.5px;color:#3a3a3a;right:997.5px;transform:scaleX(1.0200);transform-origin:100% 0;"><span>91,000</span></div>
<div class="t " id="t96" style="top:331.54px;font-size:12.5px;color:#3a3a3a;right:932.5px;transform:scaleX(1.0200);transform-origin:100% 0;"><span>96,000</span></div>
<div class="t " id="t97" style="top:331.54px;font-size:12.5px;color:#3a3a3a;right:867.5px;transform:scaleX(1.0200);transform-origin:100% 0;"><span>99,000</span></div>
<div class="t " id="t98" style="top:331.54px;font-size:12.5px;color:#3a3a3a;right:803.5px;"><span>102,000</span></div>
<div class="t " id="t99" style="top:331.54px;font-size:12.5px;color:#3a3a3a;right:738.5px;"><span>388,000</span></div>
<div class="ab" style="left:174px;top:342px;width:44px;height:1px;background:#444;"></div>
<svg style="left:0;top:0" width="420" height="350">
<path d="M89.3 245.2H348.3M89.3 262.5H348.3M89.3 245.2V262.0M348.3 245.2V262.0" stroke="#c44a4a" stroke-width="1.6" fill="none"/>
<path d="M25.0 262.1H89.3M25.0 327.8H89.3M89.3 262.0V327.8" stroke="#8a5fc0" stroke-width="1.8" fill="none"/>
<path d="M90.3 327.8H348.3M348.3 263.0V327.8" stroke="#4678c4" stroke-width="1.6" fill="none"/>
<g stroke="#fff" stroke-width="0.7">
<rect x="86.5" y="243.5" width="5" height="5" fill="#c44a4a"/>
<rect x="345.5" y="243.5" width="5" height="5" fill="#c44a4a"/>
<rect x="345.5" y="259.5" width="5" height="5" fill="#c44a4a"/>
<rect x="86.5" y="259.5" width="5" height="5" fill="#8a5fc0"/>
<rect x="24.5" y="259.5" width="3" height="5" fill="#8a5fc0"/>
<rect x="24.5" y="325.5" width="3" height="5" fill="#8a5fc0"/>
<rect x="86.5" y="325.5" width="5" height="5" fill="#8a5fc0"/>
<rect x="345.5" y="325.5" width="5" height="5" fill="#4678c4"/>
</g>
</svg>
<svg style="left:0;top:0" width="1149" height="602"><defs><linearGradient id="g0" gradientUnits="userSpaceOnUse" x1="0" y1="441.5" x2="0" y2="590.2"><stop offset="0" stop-color="#4e7fc0"/><stop offset="0.74" stop-color="#7fa3d6"/><stop offset="0.82" stop-color="#b9cdea"/><stop offset="1" stop-color="#ffffff"/></linearGradient><linearGradient id="g1" gradientUnits="userSpaceOnUse" x1="0" y1="441.5" x2="0" y2="590.2"><stop offset="0" stop-color="#c4504c"/><stop offset="0.74" stop-color="#d47d7a"/><stop offset="0.82" stop-color="#e6b3b1"/><stop offset="1" stop-color="#ffffff"/></linearGradient><linearGradient id="g2" gradientUnits="userSpaceOnUse" x1="0" y1="441.5" x2="0" y2="590.2"><stop offset="0" stop-color="#9aba58"/><stop offset="0.74" stop-color="#b5cd84"/><stop offset="0.82" stop-color="#d7e4bb"/><stop offset="1" stop-color="#ffffff"/></linearGradient><linearGradient id="g3" gradientUnits="userSpaceOnUse" x1="0" y1="441.5" x2="0" y2="590.2"><stop offset="0" stop-color="#7f63a2"/><stop offset="0.74" stop-color="#a08bbd"/><stop offset="0.82" stop-color="#cbbfdb"/><stop offset="1" stop-color="#ffffff"/></linearGradient><clipPath id="cp"><rect x="0" y="0" width="1129" height="602"/></clipPath></defs><g clip-path="url(#cp)"><rect x="35.5" y="350" width="538.0" height="290" fill="#fff" stroke="#b0b0b0" stroke-width="1.5"/><path d="M106.5 401.5H495.3" stroke="#d9d9d9" stroke-width="1"/><path d="M106.5 432.9H495.3" stroke="#d9d9d9" stroke-width="1"/><path d="M106.5 464.4H495.3" stroke="#d9d9d9" stroke-width="1"/><path d="M106.5 495.9H495.3" stroke="#d9d9d9" stroke-width="1"/><path d="M106.5 527.3H495.3" stroke="#d9d9d9" stroke-width="1"/><path d="M106.5 558.8H495.3" stroke="#d9d9d9" stroke-width="1"/><path d="M106.5 590.2H495.3" stroke="#d9d9d9" stroke-width="1"/><path d="M106.5 401.5V590.2" stroke="#d9d9d9" stroke-width="1"/><path d="M203.7 401.5V590.2" stroke="#d9d9d9" stroke-width="1"/><path d="M300.9 401.5V590.2" stroke="#d9d9d9" stroke-width="1"/><path d="M398.1 401.5V590.2" stroke="#d9d9d9" stroke-width="1"/><path d="M495.3 401.5V590.2" stroke="#d9d9d9" stroke-width="1"/><rect x="124.9" y="464.4" width="10" height="125.8" fill="url(#g0)"/><rect x="142.0" y="451.8" width="10" height="138.4" fill="url(#g1)"/><rect x="159.1" y="439.2" width="10" height="151.0" fill="url(#g2)"/><rect x="176.2" y="458.1" width="10" height="132.1" fill="url(#g3)"/><rect x="222.1" y="426.7" width="10" height="163.5" fill="url(#g0)"/><rect x="239.2" y="433.0" width="10" height="157.2" fill="url(#g1)"/><rect x="256.3" y="420.4" width="10" height="169.8" fill="url(#g2)"/><rect x="273.4" y="439.2" width="10" height="151.0" fill="url(#g3)"/><rect x="319.3" y="458.1" width="10" height="132.1" fill="url(#g0)"/><rect x="336.4" y="439.2" width="10" height="151.0" fill="url(#g1)"/><rect x="353.5" y="433.0" width="10" height="157.2" fill="url(#g2)"/><rect x="370.6" y="414.1" width="10" height="176.1" fill="url(#g3)"/><rect x="416.5" y="439.2" width="10" height="151.0" fill="url(#g0)"/><rect x="433.6" y="433.0" width="10" height="157.2" fill="url(#g1)"/><rect x="450.7" y="445.5" width="10" height="144.7" fill="url(#g2)"/><rect x="467.8" y="407.8" width="10" height="182.4" fill="url(#g3)"/><rect x="516" y="473.0" width="8" height="6.7" fill="url(#lg0)"/><rect x="516" y="498.5" width="8" height="6.7" fill="url(#lg1)"/><rect x="516" y="524.0" width="8" height="6.7" fill="url(#lg2)"/><rect x="516" y="549.5" width="8" height="6.7" fill="url(#lg3)"/></g><defs><linearGradient id="lg0" x1="0" y1="0" x2="0" y2="1"><stop offset="0" stop-color="#4e7fc0"/><stop offset="1" stop-color="#b9cdea"/></linearGradient><linearGradient id="lg1" x1="0" y1="0" x2="0" y2="1"><stop offset="0" stop-color="#c4504c"/><stop offset="1" stop-color="#e6b3b1"/></linearGradient><linearGradient id="lg2" x1="0" y1="0" x2="0" y2="1"><stop offset="0" stop-color="#9aba58"/><stop offset="1" stop-color="#d7e4bb"/></linearGradient><linearGradient id="lg3" x1="0" y1="0" x2="0" y2="1"><stop offset="0" stop-color="#7f63a2"/><stop offset="1" stop-color="#cbbfdb"/></linearGradient></defs><circle cx="35.5" cy="350" r="4.2" fill="#fff" stroke="#9a9a9a" stroke-width="1.3"/><circle cx="304" cy="350" r="4.2" fill="#fff" stroke="#9a9a9a" stroke-width="1.3"/><circle cx="573.5" cy="350" r="4.2" fill="#fff" stroke="#9a9a9a" stroke-width="1.3"/><circle cx="35.5" cy="496.3" r="4.2" fill="#fff" stroke="#9a9a9a" stroke-width="1.3"/><circle cx="573.5" cy="496.3" r="4.2" fill="#fff" stroke="#9a9a9a" stroke-width="1.3"/></svg>
<div class="t " id="t100" style="top:396.0px;font-size:10px;color:#595959;right:1053px;transform:scaleX(0.9479);transform-origin:100% 0;"><span>30,000</span></div>
<div class="t " id="t101" style="top:427.45px;font-size:10px;color:#595959;right:1053px;transform:scaleX(0.9479);transform-origin:100% 0;"><span>25,000</span></div>
<div class="t " id="t102" style="top:458.90000000000003px;font-size:10px;color:#595959;right:1053px;transform:scaleX(0.9479);transform-origin:100% 0;"><span>20,000</span></div>
<div class="t " id="t103" style="top:490.35px;font-size:10px;color:#595959;right:1053px;transform:scaleX(0.9479);transform-origin:100% 0;"><span>15,000</span></div>
<div class="t " id="t104" style="top:521.8000000000001px;font-size:10px;color:#595959;right:1053px;transform:scaleX(0.9479);transform-origin:100% 0;"><span>10,000</span></div>
<div class="t " id="t105" style="top:553.25px;font-size:10px;color:#595959;right:1053px;transform:scaleX(0.9588);transform-origin:100% 0;"><span>5,000</span></div>
<div class="t " id="t106" style="top:584.7px;font-size:10px;color:#595959;right:1053px;transform:scaleX(1.0787);transform-origin:100% 0;"><span>0</span></div>
<div class="t " id="t107" style="top:363px;font-size:18.5px;color:#595959;font-weight:bold;left:271.5px;transform:scaleX(1.1228);transform-origin:0 0;"><span>札幌店</span></div>
<div class="t" style="left:46px;top:490px;font-size:10px;color:#595959;transform:rotate(-90deg);transform-origin:50% 50%;width:20px;text-align:center">金額</div>
<div class="t " id="t108" style="top:468.5px;font-size:14.5px;color:#595959;left:528px;transform:scaleX(0.9848);transform-origin:0 0;"><span>４<span style="display:inline-block;width:3px"></span>月</span></div>
<div class="t " id="t109" style="top:494.0px;font-size:14.5px;color:#595959;left:528px;transform:scaleX(0.9848);transform-origin:0 0;"><span>５<span style="display:inline-block;width:3px"></span>月</span></div>
<div class="t " id="t110" style="top:519.5px;font-size:14.5px;color:#595959;left:528px;transform:scaleX(0.9848);transform-origin:0 0;"><span>６<span style="display:inline-block;width:3px"></span>月</span></div>
<div class="t " id="t111" style="top:545.0px;font-size:14.5px;color:#595959;left:528px;transform:scaleX(0.9848);transform-origin:0 0;"><span>７<span style="display:inline-block;width:3px"></span>月</span></div>
<div class="ab" style="left:36px;top:590px;width:537px;height:12px;overflow:hidden">
<div class="t" style="left:99.1px;top:6.8px;font-size:10.5px;color:#595959;width:40px;text-align:center;transform:scaleX(0.8)">ソフトA</div>
<div class="t" style="left:196.3px;top:6.8px;font-size:10.5px;color:#595959;width:40px;text-align:center;transform:scaleX(0.8)">ソフトB</div>
<div class="t" style="left:293.5px;top:6.8px;font-size:10.5px;color:#595959;width:40px;text-align:center;transform:scaleX(0.8)">ソフトC</div>
<div class="t" style="left:390.7px;top:6.8px;font-size:10.5px;color:#595959;width:40px;text-align:center;transform:scaleX(0.8)">ソフトD</div>
</div>
<svg style="left:0;top:0" width="1149" height="602">
<rect x="585.5" y="349.5" width="24" height="24" fill="#fff" stroke="#b5b5b5"/>
<rect x="585.5" y="383.5" width="24" height="24" fill="#fff" stroke="#b5b5b5"/>
<rect x="585.5" y="417.5" width="24" height="24" fill="#fff" stroke="#b5b5b5"/>
<path d="M597.5 354.5v13.5M590.8 361.2h13.4" stroke="#56a07f" stroke-width="3.3"/>
<path d="M605 388l1.8 1.8l-6 6.2l-1.8-1.8z" fill="#6a6a6a"/>
<path d="M598.5 394.5l2.3 2c-0.5 3.5-3.5 5.8-9 6c2-1.3 2.5-2.5 3-4c0.7-2.3 1.8-3.6 3.7-4z" fill="#3f7fc6"/><path d="M596 398.5c-0.5 1.2-1.2 2-2 2.5" stroke="#cfe0f3" stroke-width="0.8" fill="none"/>
<path d="M589 422.5h17l-6.5 7v7l-4-1.8v-5.2z" fill="#787878"/>
</svg>
<div class="ab" style="left:423px;top:321px;width:36px;height:36px;border-radius:50%;background:radial-gradient(circle,rgba(250,245,170,0.75) 0%,rgba(250,245,170,0.6) 70%,rgba(250,245,170,0) 100%)"></div>
<svg style="left:0;top:0" width="1149" height="602">
<path d="M483.3 348v5M478 353.3h11" stroke="#000" stroke-width="1"/>
<path d="M483.3 345.8l-2.6 3h5.2z M476 353.3l3-2.6v5.2z M491 353.3l-3-2.6v5.2z" fill="#000"/>
<path d="M483.6 353.6v13.5l3.2-3l2.6 5.8l2.2-1l-2.6-5.6h4.4z" fill="#fff" stroke="#000" stroke-width="1"/>
</svg>
<div class="ab" style="left:1130px;top:190px;width:19px;height:413px;background:#e6e6e6;"></div>
<div class="ab" style="left:1129px;top:205px;width:1px;height:398px;background:#ababab;"></div>
<svg style="left:0;top:0" width="1149" height="644">
<rect x="1133.5" y="191.5" width="12" height="13" fill="#fff" stroke="#ababab"/>
<path d="M1136.5 200.5h6l-3-3.5z" fill="#555"/>
<rect x="1133.5" y="204.5" width="12" height="317" fill="#fff" stroke="#ababab"/>
<rect x="1134" y="522" width="12" height="67" fill="#dadada"/>
<rect x="1133.5" y="589.5" width="12" height="13" fill="#fff" stroke="#ababab"/>
<path d="M1136.5 594.5h6l-3 3.5z" fill="#555"/>
</svg>
<div class="ab" style="left:0px;top:602px;width:1130px;height:1px;background:#ababab;"></div>
<div class="ab" style="left:0px;top:603px;width:1149px;height:24px;background:#e6e6e6;"></div>
<div class="ab" style="left:0px;top:627px;width:1149px;height:17px;background:#f3f3f3;"></div>
<div class="ab" style="left:0px;top:626px;width:1149px;height:1px;background:#d3d3d3;"></div>
<div class="ab" style="left:89px;top:602px;width:57px;height:22px;background:#fff;"></div>
<div class="ab" style="left:89px;top:602px;width:1px;height:22px;background:#c6c6c6;"></div>
<div class="ab" style="left:145px;top:602px;width:1px;height:22px;background:#c6c6c6;"></div>
<div class="ab" style="left:89px;top:622px;width:57px;height:2px;background:#217346;"></div>
<div class="t b" id="t112" style="top:608px;font-size:12px;color:#217346;left:100px;transform:scaleX(0.9444);transform-origin:0 0;"><span>札幌店</span></div>
<div class="t b" id="t113" style="top:608px;font-size:12px;color:#444;left:156px;transform:scaleX(0.9722);transform-origin:0 0;"><span>渋谷店</span></div>
<div class="t b" id="t114" style="top:608px;font-size:12px;color:#444;left:213px;transform:scaleX(0.9722);transform-origin:0 0;"><span>博多店</span></div>
<div class="ab" style="left:202px;top:606px;width:1px;height:17px;background:#9a9a9a;"></div>
<div class="ab" style="left:258px;top:606px;width:1px;height:17px;background:#9a9a9a;"></div>
<svg style="left:0;top:0" width="1149" height="644">
<path d="M26.5 611l-3 3.5l3 3.5z" fill="#c0c0c0"/><path d="M50.5 611l3 3.5l-3 3.5z" fill="#bdbdbd"/>
<circle cx="295.5" cy="614.5" r="6.8" fill="none" stroke="#666" stroke-width="1.1"/>
<path d="M295.5 610.5v8M291.5 614.5h8" stroke="#666" stroke-width="1.3"/>
<circle cx="690" cy="611" r="0.9" fill="#999"/><circle cx="690" cy="614.7" r="0.9" fill="#999"/><circle cx="690" cy="618.3" r="0.9" fill="#999"/>
<rect x="704.5" y="608.5" width="13" height="13" fill="#fff" stroke="#ababab"/>
<path d="M713 611.5l-3.5 3.5l3.5 3.5z" fill="#555"/>
<rect x="717.5" y="608.5" width="375" height="13" fill="#fff" stroke="#ababab"/>
<rect x="1092.5" y="608.5" width="25" height="13" fill="#dadada" stroke="#dadada"/>
<rect x="1117.5" y="608.5" width="12" height="13" fill="#fff" stroke="#ababab"/>
<path d="M1122 611.5l3.5 3.5l-3.5 3.5z" fill="#555"/>
<rect x="874" y="627" width="36" height="17" fill="#c8c8c8"/>
<g fill="none" stroke="#666" stroke-width="1">
<path d="M886.5 631.5h11v10h-11zM890.2 631.5v10M893.8 631.5v10M886.5 634.8h11M886.5 638.2h11"/>
<path d="M922.5 631.5h11v11h-11zM924.5 633.5h7v7h-7z"/>
<path d="M958.5 631.5h11v11h-11zM962.5 631.5v5h-4M966 631.5v5h3.5"/>
</g>
<path d="M926 636.5h4M926 638.5h4" stroke="#666" stroke-width="0.8"/>
<path d="M987 636.5h5" stroke="#555" stroke-width="1.3"/>
<path d="M998 637.5h90" stroke="#aaa" stroke-width="1"/>
<rect x="1042" y="632" width="5" height="10" fill="#666"/>
<path d="M1093 636.5h8M1097 632.5v8" stroke="#555" stroke-width="1.1"/>
</svg>
<div class="t " id="t115" style="top:631px;font-size:11px;color:#444;left:1113px;"><span>100%</span></div>
</body></html>
